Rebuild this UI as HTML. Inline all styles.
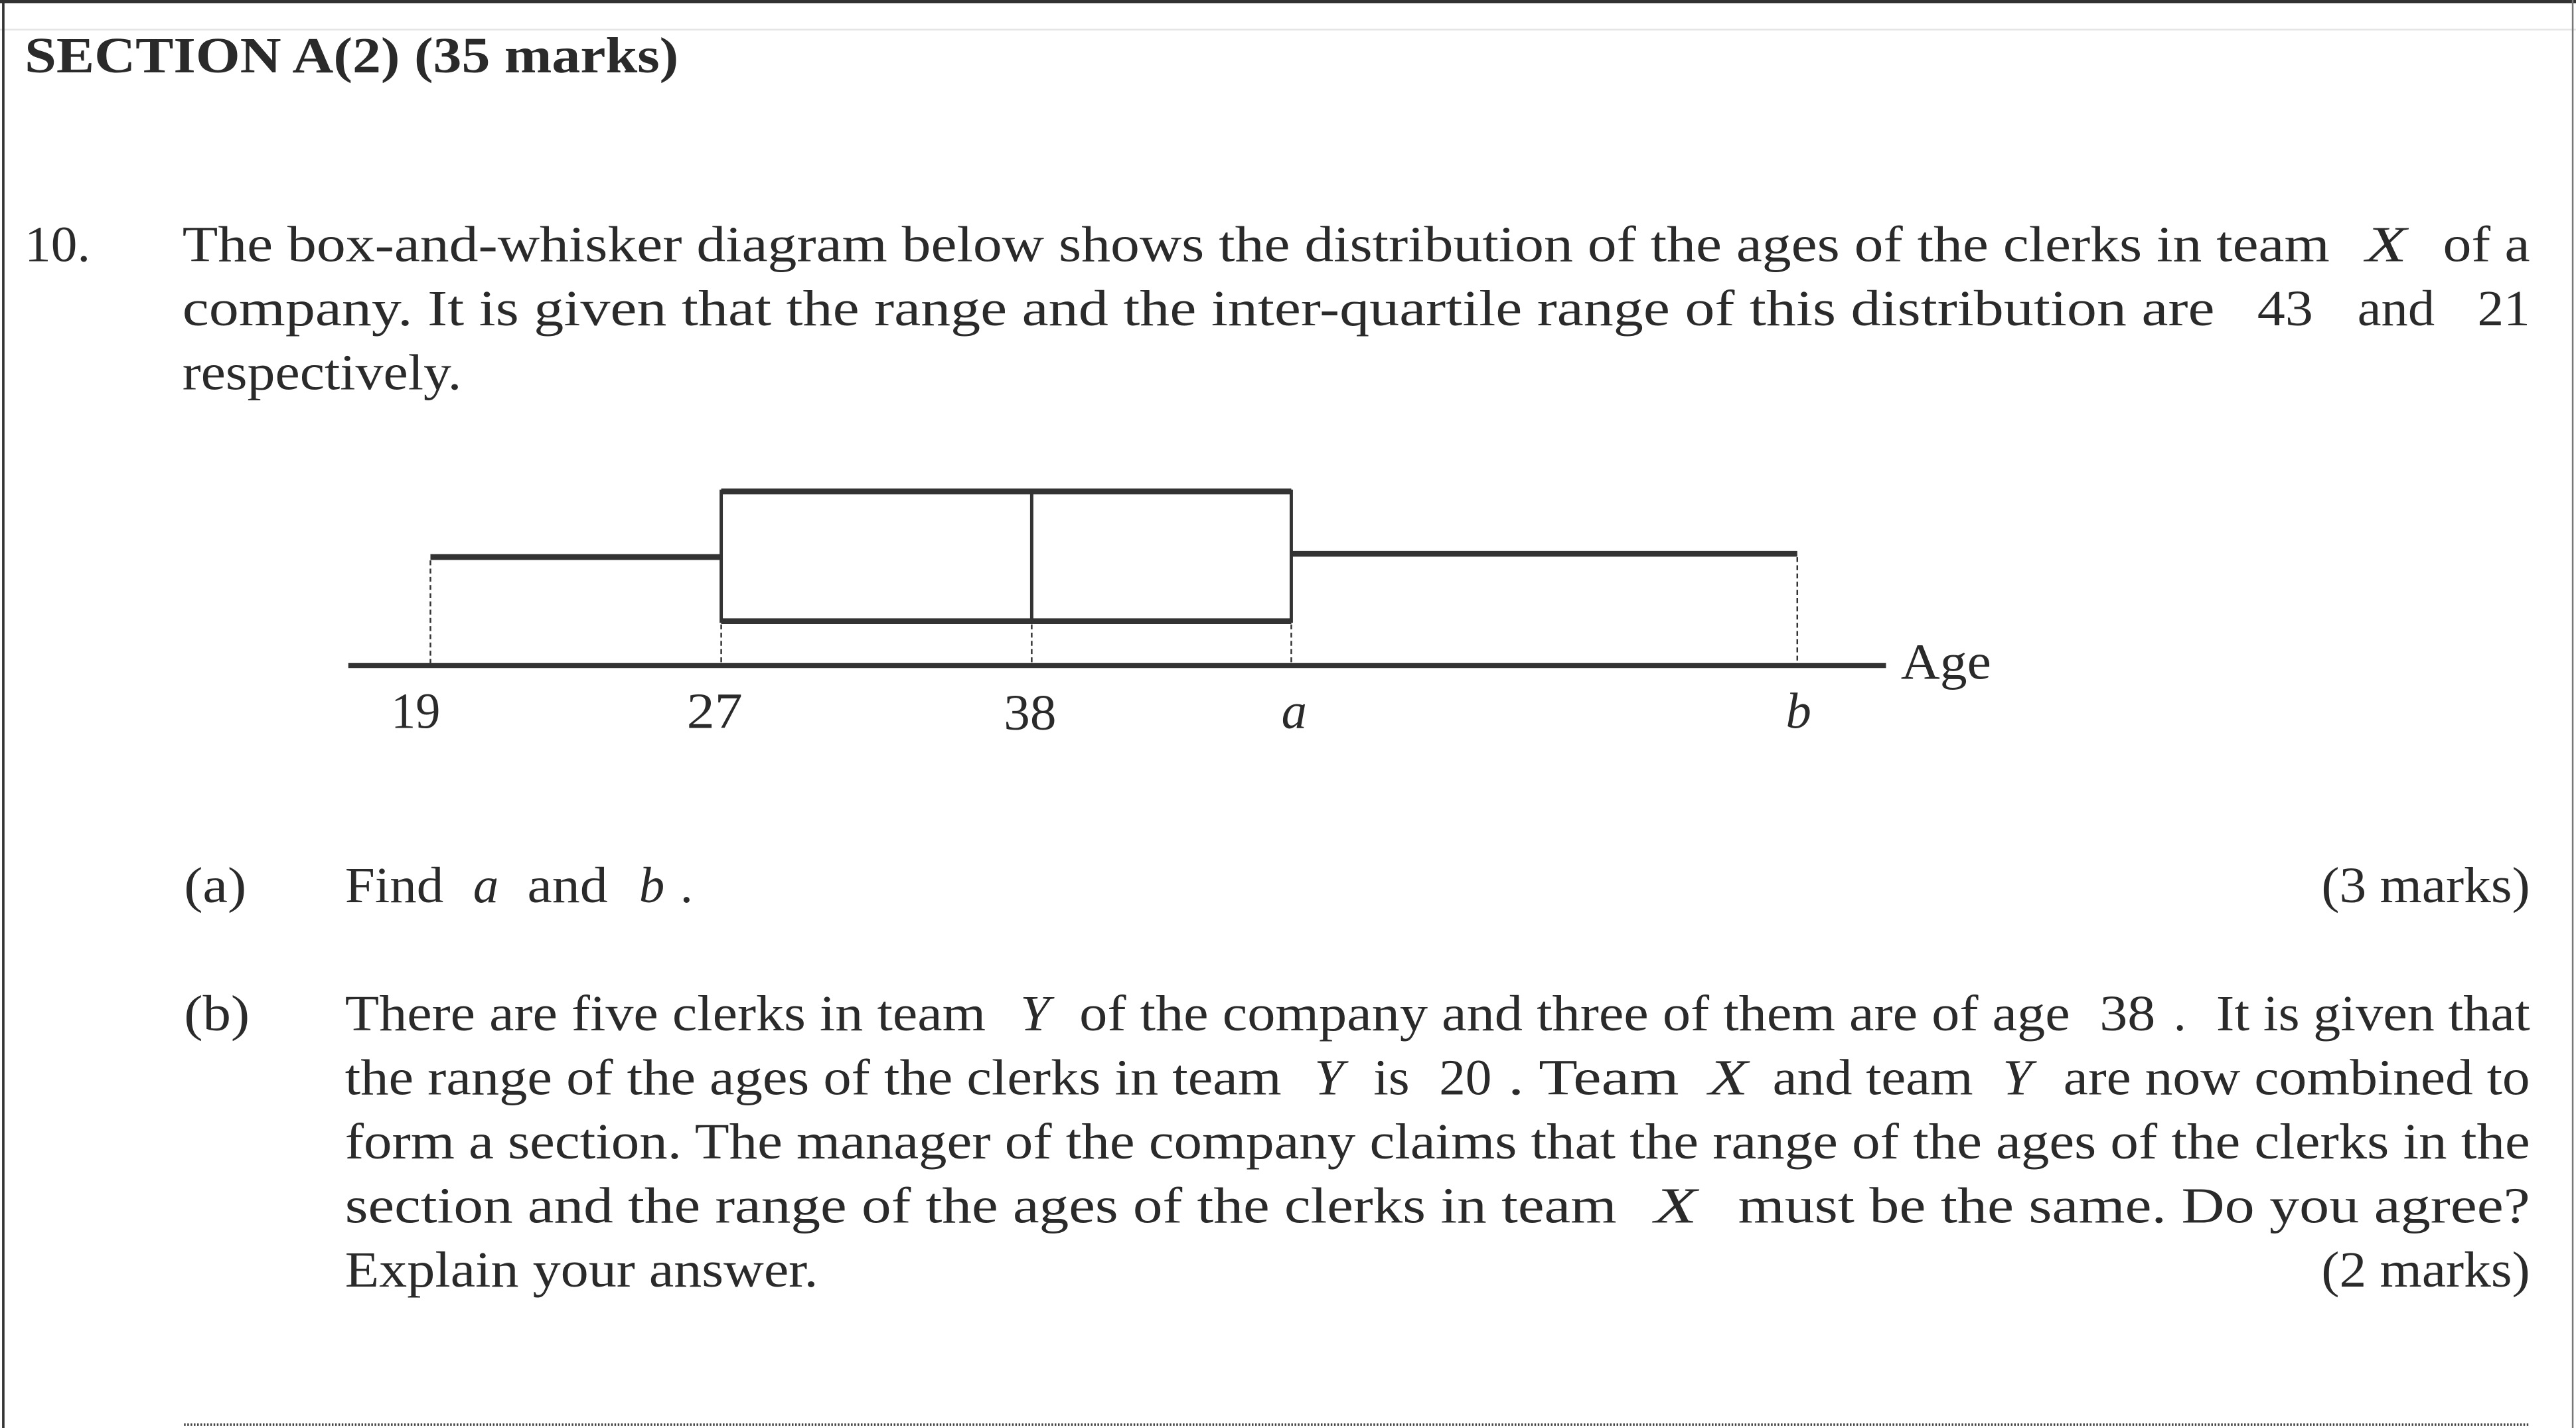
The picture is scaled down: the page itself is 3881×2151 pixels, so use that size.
<!DOCTYPE html>
<html><head><meta charset="utf-8"><style>
html,body{margin:0;padding:0;background:#fff;}
svg{display:block;}
text{font-family:"Liberation Serif",serif;fill:#2a2a2a;}
.b{font-size:31px;}
.i{font-style:italic;}
</style></head><body>
<svg width="3881" height="2151" viewBox="0 0 1568 869" xmlns="http://www.w3.org/2000/svg">
<rect width="1568" height="869" fill="#fff"/>
<line x1="0" y1="1" x2="1568" y2="1" stroke="#333" stroke-width="2"/>
<line x1="0" y1="18" x2="1568" y2="18" stroke="#e4e4e4" stroke-width="1"/>
<line x1="2" y1="0" x2="2" y2="869" stroke="#333" stroke-width="1.5"/>
<line x1="1566" y1="0" x2="1566" y2="869" stroke="#777" stroke-width="1"/>

<text x="15" y="44" class="b" font-weight="bold" textLength="398" lengthAdjust="spacingAndGlyphs">SECTION A(2)  (35 marks)</text>

<text x="15" y="159" class="b" textLength="40" lengthAdjust="spacingAndGlyphs">10.</text>
<text x="111" y="159" class="b" textLength="1307" lengthAdjust="spacingAndGlyphs">The box-and-whisker diagram below shows the distribution of the ages of the clerks in team</text>
<text x="1440" y="159" class="b i" textLength="25" lengthAdjust="spacingAndGlyphs">X</text>
<text x="1487" y="159" class="b" textLength="53" lengthAdjust="spacingAndGlyphs">of a</text>

<text x="111" y="198" class="b" textLength="1237" lengthAdjust="spacingAndGlyphs">company.  It is given that the range and the inter-quartile range of this distribution are</text>
<text x="1374" y="198" class="b" textLength="34" lengthAdjust="spacingAndGlyphs">43</text>
<text x="1435" y="198" class="b" textLength="47" lengthAdjust="spacingAndGlyphs">and</text>
<text x="1508" y="198" class="b" textLength="32" lengthAdjust="spacingAndGlyphs">21</text>
<text x="111" y="237" class="b" textLength="170" lengthAdjust="spacingAndGlyphs">respectively.</text>

<!-- diagram -->
<g stroke="#333" fill="none">
<line x1="262" y1="339" x2="439" y2="339" stroke-width="3.5"/>
<line x1="786" y1="337" x2="1094" y2="337" stroke-width="3.5"/>
<line x1="439" y1="299" x2="786" y2="299" stroke-width="3.5"/>
<line x1="439" y1="378" x2="786" y2="378" stroke-width="3.5"/>
<line x1="439" y1="298" x2="439" y2="379" stroke-width="2"/>
<line x1="786" y1="298" x2="786" y2="379" stroke-width="2"/>
<line x1="628" y1="298" x2="628" y2="379" stroke-width="2"/>
<line x1="212" y1="405" x2="1148" y2="405" stroke-width="3"/>
<g stroke-width="1" stroke-dasharray="3,2">
<line x1="262" y1="341" x2="262" y2="404"/>
<line x1="439" y1="380" x2="439" y2="404"/>
<line x1="628" y1="380" x2="628" y2="404"/>
<line x1="786" y1="380" x2="786" y2="404"/>
<line x1="1094" y1="339" x2="1094" y2="404"/>
</g>
</g>
<text x="238" y="443" class="b" textLength="30" lengthAdjust="spacingAndGlyphs">19</text>
<text x="418" y="443" class="b" textLength="34" lengthAdjust="spacingAndGlyphs">27</text>
<text x="611" y="444" class="b" textLength="32" lengthAdjust="spacingAndGlyphs">38</text>
<text x="780" y="443" class="b i">a</text>
<text x="1087" y="443" class="b i">b</text>
<text x="1157" y="413" class="b" textLength="55" lengthAdjust="spacingAndGlyphs">Age</text>

<text x="112" y="549" class="b" textLength="38" lengthAdjust="spacingAndGlyphs">(a)</text>
<text x="210" y="549" class="b" textLength="60" lengthAdjust="spacingAndGlyphs">Find</text>
<text x="288" y="549" class="b i">a</text>
<text x="321" y="549" class="b" textLength="49" lengthAdjust="spacingAndGlyphs">and</text>
<text x="389" y="549" class="b i">b</text>
<text x="414" y="549" class="b">.</text>
<text x="1413" y="549" class="b" textLength="127" lengthAdjust="spacingAndGlyphs">(3 marks)</text>

<text x="112" y="627" class="b" textLength="40" lengthAdjust="spacingAndGlyphs">(b)</text>
<text x="210" y="627" class="b" textLength="390" lengthAdjust="spacingAndGlyphs">There are five clerks in team</text>
<text x="621" y="627" class="b i" textLength="18" lengthAdjust="spacingAndGlyphs">Y</text>
<text x="657" y="627" class="b" textLength="603" lengthAdjust="spacingAndGlyphs">of the company and three of them are of age</text>
<text x="1278" y="627" class="b" textLength="34" lengthAdjust="spacingAndGlyphs">38</text>
<text x="1323" y="627" class="b">.</text>
<text x="1349" y="627" class="b" textLength="191" lengthAdjust="spacingAndGlyphs">It is given that</text>

<text x="210" y="666" class="b" textLength="570" lengthAdjust="spacingAndGlyphs">the range of the ages of the clerks in team</text>
<text x="800" y="666" class="b i" textLength="18" lengthAdjust="spacingAndGlyphs">Y</text>
<text x="836" y="666" class="b" textLength="22" lengthAdjust="spacingAndGlyphs">is</text>
<text x="876" y="666" class="b" textLength="32" lengthAdjust="spacingAndGlyphs">20</text>
<text x="918" y="666" class="b" textLength="104" lengthAdjust="spacingAndGlyphs">.  Team</text>
<text x="1040" y="666" class="b i" textLength="24" lengthAdjust="spacingAndGlyphs">X</text>
<text x="1079" y="666" class="b" textLength="122" lengthAdjust="spacingAndGlyphs">and team</text>
<text x="1219" y="666" class="b i" textLength="18" lengthAdjust="spacingAndGlyphs">Y</text>
<text x="1256" y="666" class="b" textLength="284" lengthAdjust="spacingAndGlyphs">are now combined to</text>

<text x="210" y="705" class="b" textLength="1330" lengthAdjust="spacingAndGlyphs">form a section.  The manager of the company claims that the range of the ages of the clerks in the</text>

<text x="210" y="744" class="b" textLength="774" lengthAdjust="spacingAndGlyphs">section and the range of the ages of the clerks in team</text>
<text x="1007" y="744" class="b i" textLength="26" lengthAdjust="spacingAndGlyphs">X</text>
<text x="1058" y="744" class="b" textLength="482" lengthAdjust="spacingAndGlyphs">must be the same.  Do you agree?</text>

<text x="210" y="783" class="b" textLength="288" lengthAdjust="spacingAndGlyphs">Explain your answer.</text>
<text x="1413" y="783" class="b" textLength="127" lengthAdjust="spacingAndGlyphs">(2 marks)</text>

<line x1="112" y1="867" x2="1540" y2="867" stroke="#444" stroke-width="1.5" stroke-dasharray="1,1"/>
</svg>
</body></html>
